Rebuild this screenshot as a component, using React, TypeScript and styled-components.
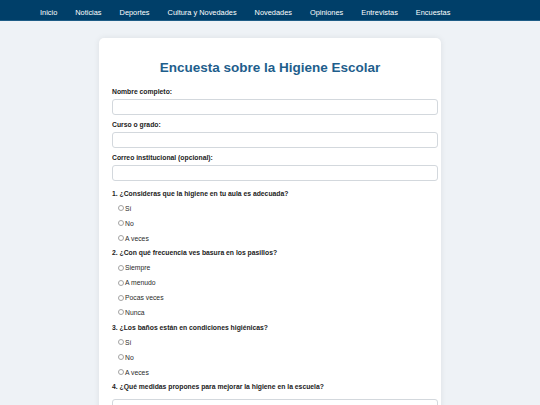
import React from "react";
import styled, { createGlobalStyle } from "styled-components";

interface questionType {
  id: string,
  title: string,
  options: string[]
}

const navItems = [
  "Inicio",
  "Noticias",
  "Deportes",
  "Cultura y Novedades",
  "Novedades",
  "Opiniones",
  "Entrevistas",
  "Encuestas",
];

const fields = [
  { id: "nombre", label: "Nombre completo:" },
  { id: "curso", label: "Curso o grado:" },
  { id: "correo", label: "Correo institucional (opcional):" },
];

const questions: questionType[] = [
  {
    id: "q1",
    title: "1. ¿Consideras que la higiene en tu aula es adecuada?",
    options: ["Sí", "No", "A veces"],
  },
  {
    id: "q2",
    title: "2. ¿Con qué frecuencia ves basura en los pasillos?",
    options: ["Siempre", "A menudo", "Pocas veces", "Nunca"],
  },
  {
    id: "q3",
    title: "3. ¿Los baños están en condiciones higiénicas?",
    options: ["Sí", "No", "A veces"],
  },
];

const App = () => {
  return (
    <>
      <GlobalStyle />
      <NavBar>
        <NavList>
          {navItems.map((item) => (
            <li key={item}>
              <NavLink href="#">{item}</NavLink>
            </li>
          ))}
        </NavList>
      </NavBar>

      <Card>
        <Title>Encuesta sobre la Higiene Escolar</Title>

        {fields.map((field) => (
          <Field key={field.id}>
            <FieldLabel htmlFor={field.id}>{field.label}</FieldLabel>
            <TextInput id={field.id} type="text" />
          </Field>
        ))}

        {/* preguntas de opción múltiple */}
        {questions.map((q) => (
          <div key={q.id}>
            <Question>{q.title}</Question>
            {q.options.map((option) => (
              <Option key={option}>
                <Radio type="radio" name={q.id} value={option} />
                {option}
              </Option>
            ))}
          </div>
        ))}

        <Question>4. ¿Qué medidas propones para mejorar la higiene en la escuela?</Question>
        <TextArea placeholder="Escribe tus sugerencias aquí..." rows={4} />
      </Card>
    </>
  );
};

export default App;

const GlobalStyle = createGlobalStyle`
  body {
    margin: 0;
    background-color: #eef2f6;
    font-family: "Liberation Sans", Arial, sans-serif;
  }
`;

const NavBar = styled.nav`
  height: 20px;
  background-color: #003f69;
  border-bottom: 1px solid #1d5c86;
`;

const NavList = styled.ul`
  display: flex;
  align-items: center;
  gap: 18px;
  height: 100%;
  margin: 0;
  padding: 0 0 0 40px;
  list-style: none;
`;

const NavLink = styled.a`
  color: #ffffff;
  font-size: 7.4px;
  text-decoration: none;
`;

const Card = styled.main`
  box-sizing: border-box;
  width: 342px;
  margin: 17px auto 0;
  padding: 13px 13px 20px;
  background-color: #ffffff;
  border-radius: 5px;
  box-shadow: 0 0 6px rgba(0, 0, 0, 8%);
`;

const Title = styled.h1`
  margin: 8.5px 0 12.7px;
  font-size: 13.5px;
  line-height: 15.5px;
  text-align: center;
  color: #1e5e8c;
`;

const Field = styled.div`
  margin-bottom: 6px;
`;

const FieldLabel = styled.label`
  display: block;
  margin-bottom: 3px;
  font-size: 6.8px;
  font-weight: bold;
  line-height: 8px;
  color: #222222;
`;

const TextInput = styled.input`
  display: block;
  width: 100%;
  height: 14px;
  padding: 0 4px;
  border: 1px solid #d3d8dd;
  border-radius: 3px;
  font-family: inherit;
  font-size: 6.8px;
`;

const Question = styled.p`
  margin: 0;
  font-size: 6.8px;
  font-weight: bold;
  line-height: 14.9px;
  color: #222222;
`;

const Option = styled.label`
  display: flex;
  align-items: center;
  height: 14.9px;
  margin-top: -0.8px;
  margin-bottom: 0.8px;
  padding-left: 6px;
  font-size: 6.8px;
  color: #2a2a2a;
`;

const Radio = styled.input`
  appearance: none;
  box-sizing: border-box;
  width: 6px;
  height: 6px;
  margin: 0 1px 0 0;
  border: 0.6px solid #a3a3a3;
  border-radius: 50%;
  background-color: #ffffff;
`;

const TextArea = styled.textarea`
  display: block;
  width: 100%;
  margin-top: 3.8px;
  padding: 4px;
  border: 1px solid #d3d8dd;
  border-radius: 3px;
  font-family: inherit;
  font-size: 6.8px;
  resize: vertical;

  &::placeholder {
    color: #8a8a8a;
  }
`;
